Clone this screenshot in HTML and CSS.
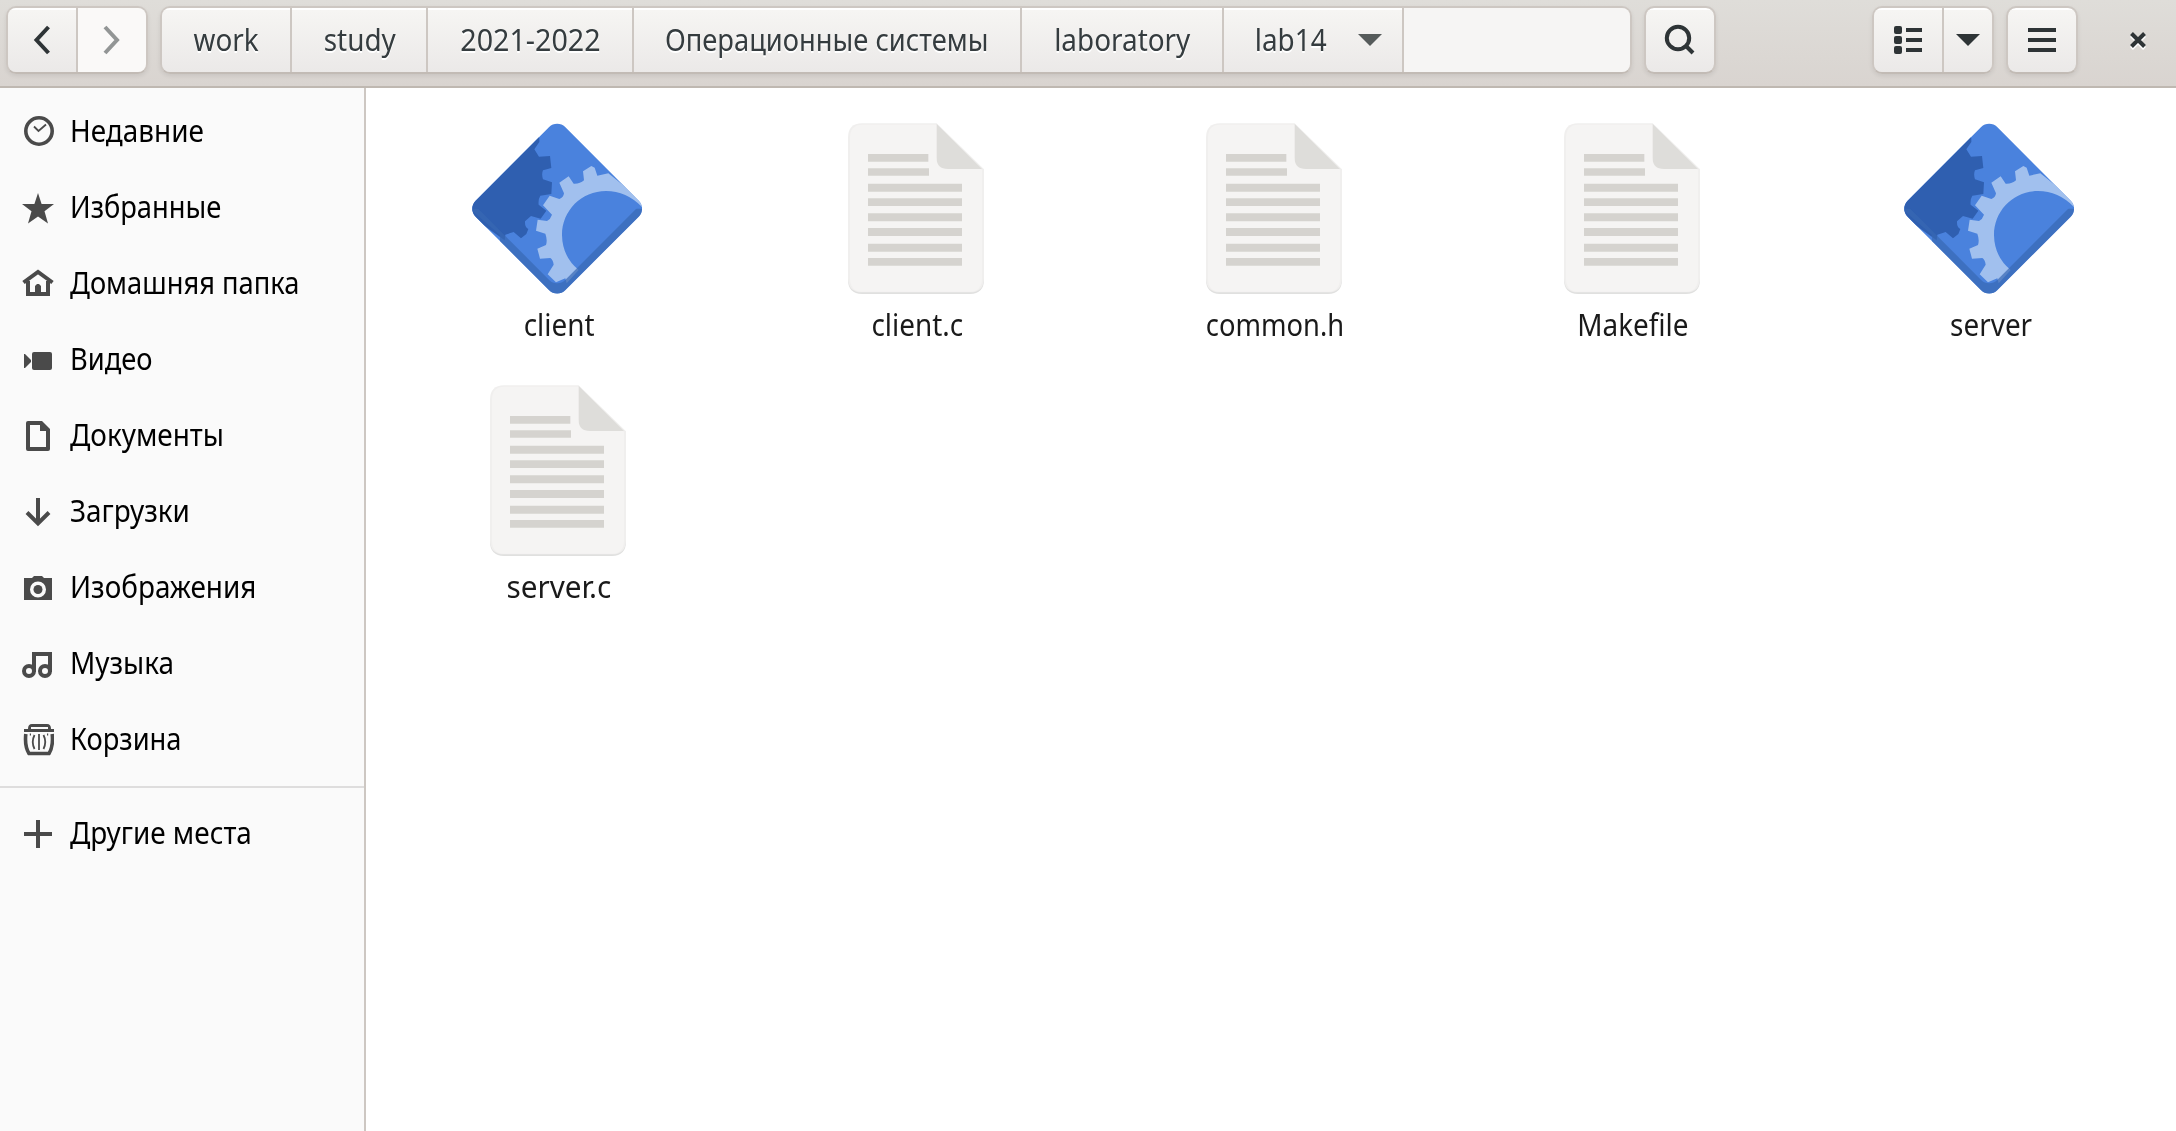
FILE: index.html
```html
<!DOCTYPE html>
<html lang="ru">
<head>
<meta charset="utf-8">
<title>lab14</title>
<link rel="stylesheet" href="styles.css">
</head>
<body>
<svg width="0" height="0" class="defs" aria-hidden="true">
  <defs>
    <clipPath id="diamond"><rect x="131.5" y="106" width="380" height="380" rx="34" transform="rotate(45 321.5 296)"/></clipPath>
    <mask id="rim">
      <rect x="0" y="0" width="640" height="600" fill="#fff"/>
      <rect x="131.5" y="106" width="380" height="380" rx="34" transform="translate(0 -31) rotate(45 321.5 296)" fill="#000"/>
    </mask>
    <symbol id="exec" viewBox="36 9 576 576">
      <g clip-path="url(#diamond)">
        <rect x="36" y="9" width="576" height="576" fill="#4a82dd"/>
        <path fill="#2f5fb0" d="M268 84V96L253 118 267 140 300 138 304 174 279 181Q274 192 279 208L306 217 304 252 271 257Q264 268 266 284L289 302 272 326 243 318 225 334Q224 352 235 357L229 372 213 385 191 366 166 374 164 391 36 300 250 60Z"/>
        <path fill="#a1c0ee" d="M399 184 424 168 434 173 442 197 475 190 600 290 577 292Q530 243 468 243C394 243 336 302 336 375Q337 440 386 480L350 520 346 505 318 517 293 493 311 464Q309 449 301 444L270 446 262 416 288 405Q293 390 286 371L258 362 263 329 291 333Q302 327 306 314L279 286 299 257 328 267Q341 262 342 250L328 218 356 199 371 221Q390 222 402 211Z"/>
        <path mask="url(#rim)" fill="#3868b4" fill-opacity=".7" d="M150 375 60 296H590V585H150Z"/>
      </g>
    </symbol>
    <symbol id="doc" viewBox="-30 9 576 576">
      <path fill="#e0e0df" d="M54 400H462V508Q462 552 420 552H96Q54 552 54 508Z"/>
      <path fill="#f0efee" d="M96 40H320L462 178V503Q462 547 420 547H96Q54 547 54 503V84Q54 40 96 40Z"/>
      <path fill="#f5f4f3" d="M96 44H320L456 180V504Q456 545 420 545H96Q60 545 60 504V84Q60 44 96 44Z"/>
      <path fill="#deddda" d="M320 42 456 177H354Q320 177 320 144Z"/>
      <path fill="#d5d3cf" d="M114 132h181v23H114ZM114 175h183v22H114ZM114 221h282v24H114ZM114 265h282v23H114ZM114 310h282v24H114ZM114 354h282v24H114ZM114 401h282v24H114ZM114 444h282v23H114Z"/>
    </symbol>
  </defs>
</svg>

<header class="bar">
  <div class="group nav">
    <button class="btn square"><svg viewBox="0 0 32 32"><path d="M22.500 3 10.500 16 22.500 29" class="line"/></svg></button>
    <button class="btn square off"><svg viewBox="0 0 32 32"><path d="M9 3 21 16 9 29" class="line"/></svg></button>
  </div>
  <nav class="group path">
    <button class="btn p-work"><span class="t">work</span></button>
    <button class="btn p-study"><span class="t">study</span></button>
    <button class="btn p-year"><span class="t wide">2021-2022</span></button>
    <button class="btn p-os"><span class="t tight">Операционные системы</span></button>
    <button class="btn p-labs"><span class="t">laboratory</span></button>
    <button class="btn p-lab"><span class="t">lab14</span><svg class="arrow" viewBox="0 0 24 12"><path d="M0 0H24L12 12Z"/></svg></button>
    <div class="rest"></div>
  </nav>
  <button class="btn group search"><svg viewBox="0 0 32 32"><circle cx="14" cy="14" r="11.200" class="line"/><path d="M22 22 29 29" class="line"/></svg></button>
  <div class="group view">
    <button class="btn square"><svg viewBox="0 0 32 32"><rect x="2" y="2" width="8" height="8" rx="2"/><rect x="2" y="12" width="8" height="8" rx="2"/><rect x="2" y="22" width="8" height="8" rx="2"/><path d="M14 4h16v4H14zM14 14h16v4H14zM14 24h16v4H14z"/></svg></button>
    <button class="btn drop"><svg class="arrow" viewBox="0 0 24 12"><path d="M0 0H24L12 12Z"/></svg></button>
  </div>
  <button class="btn group menu"><svg viewBox="0 0 32 32"><path d="M2 4h28v4H2zM2 14h28v4H2zM2 24h28v4H2z"/></svg></button>
  <button class="close"><svg viewBox="0 0 16 16"><path d="M1.500 1.500 14.500 14.500M14.500 1.500 1.500 14.500" class="line"/></svg></button>
</header>

<main class="body">
  <aside class="side">
    <a class="place"><svg viewBox="0 0 32 32"><circle cx="17" cy="15" r="13.200" class="line thin"/><path d="M12 10.500 16.500 15 24 8.500" class="line hair"/></svg><span class="t">Недавние</span></a>
    <a class="place"><svg viewBox="0 0 32 32"><path d="M16 1 19.600 12H32L22.500 19.200 26 31.500 16 24.500 6 31.500 9.500 19.200 0 12H12.400Z"/></svg><span class="t tight">Избранные</span></a>
    <a class="place"><svg viewBox="0 0 32 32"><path d="M1.500 14.500 16 4 30.500 14.500M6 13V26H26V13" class="line"/><path d="M13 26V18L15 16H17L19 18V26Z"/></svg><span class="t tight">Домашняя папка</span></a>
    <a class="place"><svg viewBox="0 0 32 32"><rect x="10" y="8" width="20" height="18" rx="2"/><path d="M2 10H3L9 16V18L3 24H2Z"/></svg><span class="t tight">Видео</span></a>
    <a class="place"><svg viewBox="0 0 32 32"><path fill-rule="evenodd" d="M6 1H20L28 9V29Q28 31 26 31H6Q4 31 4 29V3Q4 1 6 1ZM8 5V27H24V11H18V5Z"/></svg><span class="t">Документы</span></a>
    <a class="place"><svg viewBox="0 0 32 32"><path d="M16 2V27M5 16.500 16 27.500 27 16.500" class="line"/></svg><span class="t">Загрузки</span></a>
    <a class="place"><svg viewBox="0 0 32 32"><path fill-rule="evenodd" d="M2 6H10L12 4H20L22 6H30V28H2ZM16 9.500A8 8 0 1 0 16 25.500A8 8 0 1 0 16 9.500Z"/><circle cx="16" cy="17.500" r="4.500"/></svg><span class="t">Изображения</span></a>
    <a class="place"><svg viewBox="0 0 32 32"><circle cx="7" cy="23" r="5" class="line"/><circle cx="23" cy="23" r="5" class="line"/><path d="M12 24V6H28V24" class="line"/></svg><span class="t">Музыка</span></a>
    <a class="place"><svg viewBox="0 0 32 32"><path fill-rule="evenodd" d="M2 8V5H6Q6 0 10 0H25Q29 0 29 5H32V8ZM9 5H26V3H9Z"/><path d="M3.800 10Q2.500 22 7 29.500H27Q31.500 22 30.200 10" class="line thin"/><path d="M7.800 10.500H9M25 10.500H26.200M12.500 11Q9 18 12.500 25M17 10V26M21.500 11Q25 18 21.500 25" class="line hair"/></svg><span class="t tight">Корзина</span></a>
    <div class="rule"></div>
    <a class="place"><svg viewBox="0 0 32 32"><path d="M14 2h4v12h12v4H18v12h-4V18H2v-4h12z"/></svg><span class="t">Другие места</span></a>
  </aside>
  <section class="files">
    <figure><svg><use href="#exec"/></svg><figcaption class="t">client</figcaption></figure>
    <figure><svg><use href="#doc"/></svg><figcaption class="t">client.c</figcaption></figure>
    <figure><svg><use href="#doc"/></svg><figcaption class="t tight">common.h</figcaption></figure>
    <figure><svg><use href="#doc"/></svg><figcaption class="t">Makefile</figcaption></figure>
    <figure><svg><use href="#exec"/></svg><figcaption class="t">server</figcaption></figure>
    <figure><svg><use href="#doc"/></svg><figcaption class="t full">server.c</figcaption></figure>
  </section>
</main>
</body>
</html>
```
FILE: styles.css
```css
* { box-sizing: border-box; }
body {
  margin: 0;
  height: 1131px;
  display: flex;
  flex-direction: column;
  overflow: hidden;
  background: #fff;
  font: 30px/40px "Noto Sans", sans-serif;
  color: #000;
}
.defs { position: absolute; }
.t { display: inline-block; white-space: nowrap; transform: scaleX(.93); }
.t.tight { transform: scaleX(.91); }
.t.wide { transform: scaleX(.955); }
.t.full { transform: scaleX(.99); }

.bar {
  flex: none;
  height: 88px;
  padding: 6px 16px 0 6px;
  display: flex;
  align-items: flex-start;
  background: linear-gradient(#dfddd9, #d9d4d0);
  border-bottom: 2px solid #bfb8b1;
}
.group {
  height: 68px;
  display: flex;
  border: 2px solid #cdc7c2;
  border-bottom-color: #c2bbb5;
  border-radius: 10px;
  box-shadow: 0 2px 4px rgba(0, 0, 0, .08);
}
.btn {
  border: 0;
  padding: 0;
  display: flex;
  align-items: center;
  justify-content: center;
  font: inherit;
  color: #2e3436;
  background: linear-gradient(#fff 2px, #f6f5f3 2px, #ebe9e8);
  text-shadow: 0 2px #fff;
}
.group > .btn { height: 64px; }
.group > .btn + .btn, .rest { border-left: 2px solid #cdc7c2; }
.group > :first-child { border-radius: 8px 0 0 8px; }
.group > :last-child { border-radius: 0 8px 8px 0; }
.btn.group { border: 2px solid #cdc7c2; border-bottom-color: #c2bbb5; background-clip: padding-box; }
.btn svg { width: 32px; height: 32px; fill: #2e3436; color: #2e3436; }
.btn svg.arrow { width: 24px; height: 12px; }
.line { fill: none; stroke: currentColor; stroke-width: 4; }
.thin { stroke-width: 3.6; }
.hair { stroke-width: 1.8; }

.nav { width: 142px; margin-right: 12px; }
.nav .btn { width: 68px; }
.nav .btn + .btn { width: 70px; }
.btn.off { background: #faf9f8; }
.btn.off svg { color: #929595; }
.path { width: 1472px; margin-right: 12px; }
.path .t { color: #353c3f; }
.p-work { width: 128px; }
.p-study { width: 136px; padding-left: 1px; }
.p-year { width: 206px; }
.p-os { width: 388px; }
.p-labs { width: 202px; }
.p-lab { width: 180px; gap: 28px; padding-left: 8px; }
.p-lab svg.arrow { fill: #565b5b; }
.rest { flex: 1; background: #f6f5f4; }
.search { width: 72px; }
.view { width: 122px; margin-left: auto; margin-right: 12px; }
.view .square { width: 68px; }
.view .drop { width: 50px; }
.menu { width: 72px; }
.close {
  width: 16px;
  height: 68px;
  padding: 0;
  margin: 0 14px 0 52px;
  border: 0;
  background: none;
  color: #2e3436;
  display: flex;
  align-items: center;
}
.close svg { width: 16px; height: 16px; filter: drop-shadow(0 2px 0 #fff); }

.body { flex: 1; display: flex; }
.side {
  width: 366px;
  padding-top: 6px;
  background: #fafafa;
  border-right: 2px solid #cdc7c2;
}
.place { height: 76px; padding-left: 22px; display: flex; align-items: center; gap: 16px; }
.place svg { width: 32px; height: 32px; fill: #4a4a4a; color: #4a4a4a; }
.place .t { transform-origin: left; margin-bottom: 2px; }
.rule { height: 2px; margin: 8px 0; background: #dedddd; }

.files {
  flex: 1;
  padding: 25px 0 0 13px;
  display: grid;
  grid-template-columns: repeat(5, 358px);
  grid-auto-rows: 262px;
  align-content: start;
}
figure { margin: 0; display: flex; flex-direction: column; align-items: center; }
figure svg { width: 192px; height: 192px; }
figure .t { color: #1a1a1a; margin-left: 2px; }
```
